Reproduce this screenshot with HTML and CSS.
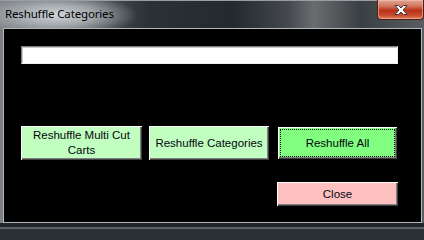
FILE: index.html
```html
<!DOCTYPE html>
<html>
<head>
<meta charset="utf-8">
<link rel="stylesheet" href="styles.css">
</head>
<body>
<div class="window">
  <div class="titlebar">
    <span class="title">Reshuffle Categories</span>
    <div class="close-x">
      <svg width="18" height="12" viewBox="0 0 18 12">
        <path d="M3 1.5 L6.5 1.5 L9 4 L11.5 1.5 L15 1.5 L11 6 L15 10.5 L11.5 10.5 L9 8 L6.5 10.5 L3 10.5 L7 6 Z" fill="#ffffff" stroke="#3a3a3a" stroke-width="1"/>
      </svg>
    </div>
  </div>
  <div class="frame">
    <div class="client">
      <div class="textbox"></div>
      <div class="btn-row">
        <button class="btn green b1">Reshuffle Multi Cut<br>Carts</button>
        <button class="btn green b2">Reshuffle Categories</button>
        <button class="btn bright b3">Reshuffle All</button>
      </div>
      <div class="close-row">
        <button class="btn pink">Close</button>
      </div>
    </div>
  </div>
  <div class="bottom-edge"></div>
</div>
</body>
</html>
```

FILE: styles.css
```css
html, body {
  margin: 0;
  padding: 0;
  background: #2a2f33;
}

.window {
  width: 424px;
  height: 233px;
  box-sizing: border-box;
  display: flex;
  flex-direction: column;
  background:
    radial-gradient(ellipse 80px 22px at 58px 14px, rgba(215,218,222,0.95) 0%, rgba(190,195,200,0.75) 45%, rgba(120,125,130,0) 100%),
    linear-gradient(90deg, #7c8084 0%, #50565b 20%, #2b3136 35%, #23292e 55%, #45494d 68%, #6a6d70 74%, #3a3f43 85%, #5a5e62 100%);
  border-top: 1px solid #9a9ea2;
}

.titlebar {
  height: 27px;
  display: flex;
  align-items: flex-start;
  flex-shrink: 0;
}

.title {
  font-family: "Noto Sans", "DejaVu Sans", sans-serif;
  font-size: 11.5px;
  color: #000;
  padding-left: 5px;
  padding-top: 5px;
  letter-spacing: -0.15px;
}

.close-x {
  margin-left: auto;
  margin-top: -1px;
  width: 47px;
  height: 20px;
  box-sizing: border-box;
  border: 1px solid #4a2018;
  border-top: none;
  border-radius: 0 0 4px 4px;
  background: linear-gradient(180deg, #e0a898 0%, #d47860 30%, #b8321a 55%, #c84a2c 80%, #e08060 100%);
  box-shadow: inset 0 0 0 1px rgba(255,200,180,0.5);
  display: flex;
  align-items: center;
  justify-content: center;
}

.frame {
  flex-shrink: 0;
  padding: 0 2px 0 3px;
}

.bottom-edge {
  flex: 1;
  background: linear-gradient(180deg, #1e2428 0%, #1e2428 40%, #5a6064 45%, #5a6064 60%, #2a3034 65%, #2a3034 100%);
}

.client {
  width: 419px;
  height: 195px;
  box-sizing: border-box;
  border: 1px solid #b4b8bc;
  background: #000;
  padding: 17px 0 0 17px;
  display: flex;
  flex-direction: column;
  align-items: flex-start;
}

.textbox {
  width: 377px;
  height: 18px;
  box-sizing: border-box;
  background: #fff;
  border-top: 1px solid #808080;
  border-left: 1px solid #808080;
  border-right: 1px solid #f0f0f0;
  border-bottom: 1px solid #f0f0f0;
  box-shadow: inset 1px 1px 0 #c8c8c8;
}

.btn-row {
  margin-top: 62px;
  display: flex;
}

.btn {
  box-sizing: border-box;
  height: 34px;
  border: none;
  padding: 0;
  margin: 0;
  font-family: "Liberation Sans", Arial, sans-serif;
  font-size: 11.5px;
  line-height: 15px;
  color: #05050f;
  box-shadow: inset 1px 1px 0 #ffffff, inset -1px -1px 0 #404040, inset -2px -2px 0 #808080;
}

.green {
  background: #c0ffc0;
}

.bright {
  background: #80ff80;
  border: 1px solid #000;
  outline: 1px dotted #000;
  outline-offset: -4px;
}

.pink {
  background: #ffc0c0;
  width: 121px;
  height: 24px;
}

.b1 {
  width: 121px;
}

.b2 {
  width: 120px;
  margin-left: 7px;
}

.b3 {
  width: 121px;
  margin-left: 8px;
}

.close-row {
  margin-top: 22px;
  margin-left: 256px;
  display: flex;
}
```
